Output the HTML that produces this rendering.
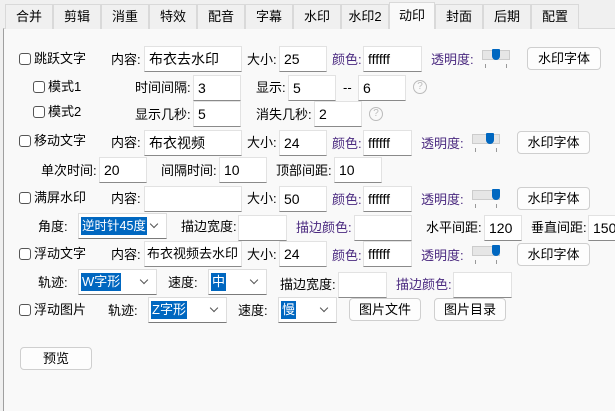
<!DOCTYPE html>
<html><head><meta charset="utf-8"><style>
*{box-sizing:border-box;margin:0;padding:0}
body{width:615px;height:411px;overflow:hidden;background:#f0f0f0;font-family:"Liberation Sans","Noto Sans CJK SC",sans-serif;font-size:13px;color:#000;position:relative}
.tab{position:absolute;top:4px;height:25px;border:1px solid #d9d9d9;border-bottom:none;background:#f0f0f0;text-align:center;line-height:24px;font-size:13px}
.panel{position:absolute;left:3px;top:28px;width:612px;height:383px;background:#f9f9f9;border-left:1px solid #a0a0a0;border-top:1px solid #d9d9d9}
.in{position:absolute;height:26px;background:#fff;border:1px solid #e2e2e2;border-bottom:1px solid #8a8a8a;padding-left:4px;line-height:24px;font-size:14px;overflow:hidden;white-space:nowrap}
.lb{position:absolute;line-height:16px;font-size:13px;white-space:nowrap}
.p{color:#4b2a80}
.cb{position:absolute;width:12px;height:12px;border:1px solid #555;border-radius:3px;background:#fff}
.btn{position:absolute;height:23px;border:1px solid #cfcfcf;border-radius:4px;background:#fdfdfd;text-align:center;line-height:21px;font-size:13px}
.sel{position:absolute;height:26px;background:#fff;border:1px solid #7a7a7a;border-top-color:#ddd;border-left-color:#ddd;border-right-color:#ddd;overflow:hidden}
.sel span{position:absolute;left:2px;top:3px;background:#0067c0;color:#fff;line-height:18px;font-size:13px;padding:0 1px;white-space:nowrap}
.sel i{position:absolute;right:9px;top:7px;width:6px;height:6px;border-right:1px solid #555;border-bottom:1px solid #555;transform:rotate(45deg)}
.sl{position:absolute;width:28px;height:20px}
.sl .t{position:absolute;left:0;top:1px;width:28px;height:10px;background:#e6e6e6;border:1px solid #ccc}
.sl .th{position:absolute;top:0;width:8px;height:11px;background:#0067c0;border-radius:1px 1px 4px 4px}
.sl .k1,.sl .k2{position:absolute;top:15px;width:1px;height:4px;background:#999}
.sl .k1{left:3px}.sl .k2{left:24px}
.q{position:absolute;width:14px;height:14px;border:1px solid #bbb;border-radius:50%;color:#bbb;font-size:10px;text-align:center;line-height:12px}
</style></head><body>
<div class="panel"></div>
<div class="tab" style="left:5px;width:48px">合并</div>
<div class="tab" style="left:53px;width:48px">剪辑</div>
<div class="tab" style="left:101px;width:48px">消重</div>
<div class="tab" style="left:149px;width:48px">特效</div>
<div class="tab" style="left:197px;width:48px">配音</div>
<div class="tab" style="left:245px;width:48px">字幕</div>
<div class="tab" style="left:293px;width:48px">水印</div>
<div class="tab" style="left:341px;width:48px">水印2</div>
<div class="tab" style="left:389px;top:2px;height:27px;width:46px;background:#f9f9f9;line-height:26px">动印</div>
<div class="tab" style="left:435px;width:48px">封面</div>
<div class="tab" style="left:483px;width:48px">后期</div>
<div class="tab" style="left:531px;width:48px">配置</div>

<div class="cb" style="left:19px;top:53px"></div><div class="lb" style="left:34px;top:51px">跳跃文字</div>
<div class="lb" style="left:111px;top:52px">内容:</div><div class="in" style="left:144px;top:46px;width:98px">布衣去水印</div>
<div class="lb" style="left:247px;top:52px">大小:</div><div class="in" style="left:279px;top:46px;width:48px">25</div>
<div class="lb p" style="left:332px;top:52px">颜色:</div><div class="in" style="left:363px;top:46px;width:59px">ffffff</div>
<div class="lb p" style="left:431px;top:52px">透明度:</div>
<div class="sl" style="left:482px;top:49px"><div class="t"></div><div class="th" style="left:10px"></div><div class="k1"></div><div class="k2"></div></div>
<div class="btn" style="left:527px;top:47px;width:74px">水印字体</div>

<div class="cb" style="left:33px;top:81px"></div><div class="lb" style="left:48px;top:79px">模式1</div>
<div class="lb" style="left:135px;top:80px">时间间隔:</div><div class="in" style="left:193px;top:75px;width:48px">3</div>
<div class="lb" style="left:256px;top:80px">显示:</div><div class="in" style="left:288px;top:75px;width:48px">5</div>
<div class="lb" style="left:343px;top:80px">--</div><div class="in" style="left:358px;top:75px;width:48px">6</div>
<div class="q" style="left:413px;top:80px">?</div>

<div class="cb" style="left:33px;top:106px"></div><div class="lb" style="left:48px;top:104px">模式2</div>
<div class="lb" style="left:135px;top:107px">显示几秒:</div><div class="in" style="left:193px;top:101px;width:48px">5</div>
<div class="lb" style="left:256px;top:107px">消失几秒:</div><div class="in" style="left:314px;top:101px;width:48px">2</div>
<div class="q" style="left:369px;top:107px">?</div>

<div class="cb" style="left:19px;top:135px"></div><div class="lb" style="left:34px;top:133px">移动文字</div>
<div class="lb" style="left:111px;top:135px">内容:</div><div class="in" style="left:144px;top:130px;width:98px">布衣视频</div>
<div class="lb" style="left:247px;top:135px">大小:</div><div class="in" style="left:279px;top:130px;width:48px">24</div>
<div class="lb p" style="left:332px;top:136px">颜色:</div><div class="in" style="left:363px;top:130px;width:49px">ffffff</div>
<div class="lb p" style="left:421px;top:136px">透明度:</div>
<div class="sl" style="left:472px;top:133px"><div class="t"></div><div class="th" style="left:14px"></div><div class="k1"></div><div class="k2"></div></div>
<div class="btn" style="left:517px;top:131px;width:73px">水印字体</div>

<div class="lb" style="left:41px;top:163px">单次时间:</div><div class="in" style="left:99px;top:157px;width:48px">20</div>
<div class="lb" style="left:161px;top:163px">间隔时间:</div><div class="in" style="left:219px;top:157px;width:48px">10</div>
<div class="lb" style="left:276px;top:163px">顶部间距:</div><div class="in" style="left:334px;top:157px;width:48px">10</div>

<div class="cb" style="left:19px;top:192px"></div><div class="lb" style="left:34px;top:190px">满屏水印</div>
<div class="lb" style="left:111px;top:191px">内容:</div><div class="in" style="left:144px;top:186px;width:98px"></div>
<div class="lb" style="left:247px;top:191px">大小:</div><div class="in" style="left:279px;top:186px;width:48px">50</div>
<div class="lb p" style="left:332px;top:192px">颜色:</div><div class="in" style="left:363px;top:186px;width:49px">ffffff</div>
<div class="lb p" style="left:421px;top:192px">透明度:</div>
<div class="sl" style="left:472px;top:189px"><div class="t"></div><div class="th" style="left:20px"></div><div class="k1"></div><div class="k2"></div></div>
<div class="btn" style="left:517px;top:187px;width:73px">水印字体</div>

<div class="lb" style="left:38px;top:219px">角度:</div>
<div class="sel" style="left:78px;top:213px;width:89px"><span style="font-size:12.5px">逆时针45度</span><i></i></div>
<div class="lb" style="left:181px;top:219px">描边宽度:</div><div class="in" style="left:238px;top:215px;width:49px"></div>
<div class="lb p" style="left:296px;top:220px">描边颜色:</div><div class="in" style="left:354px;top:215px;width:58px"></div>
<div class="lb" style="left:426px;top:220px">水平间距:</div><div class="in" style="left:484px;top:215px;width:38px">120</div>
<div class="lb" style="left:531px;top:220px">垂直间距:</div><div class="in" style="left:588px;top:215px;width:40px">150</div>

<div class="cb" style="left:19px;top:248px"></div><div class="lb" style="left:34px;top:246px">浮动文字</div>
<div class="lb" style="left:111px;top:247px">内容:</div><div class="in" style="left:144px;top:241px;width:98px;font-size:13px;padding-left:2px">布衣视频去水印</div>
<div class="lb" style="left:247px;top:247px">大小:</div><div class="in" style="left:279px;top:241px;width:48px">24</div>
<div class="lb p" style="left:332px;top:248px">颜色:</div><div class="in" style="left:363px;top:241px;width:49px">ffffff</div>
<div class="lb p" style="left:421px;top:248px">透明度:</div>
<div class="sl" style="left:472px;top:245px"><div class="t"></div><div class="th" style="left:20px"></div><div class="k1"></div><div class="k2"></div></div>
<div class="btn" style="left:517px;top:243px;width:73px">水印字体</div>

<div class="lb" style="left:38px;top:275px">轨迹:</div>
<div class="sel" style="left:78px;top:269px;width:79px"><span>W字形</span><i></i></div>
<div class="lb" style="left:168px;top:275px">速度:</div>
<div class="sel" style="left:208px;top:269px;width:59px"><span>中</span><i></i></div>
<div class="lb" style="left:280px;top:277px">描边宽度:</div><div class="in" style="left:338px;top:272px;width:49px"></div>
<div class="lb p" style="left:396px;top:277px">描边颜色:</div><div class="in" style="left:453px;top:272px;width:59px"></div>

<div class="cb" style="left:19px;top:304px"></div><div class="lb" style="left:34px;top:302px">浮动图片</div>
<div class="lb" style="left:108px;top:303px">轨迹:</div>
<div class="sel" style="left:148px;top:297px;width:79px"><span>Z字形</span><i></i></div>
<div class="lb" style="left:238px;top:303px">速度:</div>
<div class="sel" style="left:278px;top:297px;width:59px"><span>慢</span><i></i></div>
<div class="btn" style="left:349px;top:298px;width:72px">图片文件</div>
<div class="btn" style="left:434px;top:298px;width:72px">图片目录</div>

<div class="btn" style="left:20px;top:347px;width:72px">预览</div>
</body></html>
